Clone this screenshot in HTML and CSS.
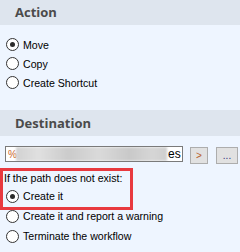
FILE: index.html
```html
<!DOCTYPE html>
<html>
<head>
<meta charset="utf-8">
<link rel="stylesheet" href="styles.css">
</head>
<body>
<div class="panel">
  <div class="band">Action</div>
  <div class="options first">
    <div class="radio checked"><span class="dot"></span>Move</div>
    <div class="radio"><span class="dot"></span>Copy</div>
    <div class="radio"><span class="dot"></span>Create Shortcut</div>
  </div>
  <div class="band band-dest">Destination</div>
  <div class="pathrow">
    <div class="textbox"><span class="var">%</span><span class="blur"></span><span class="tail">es</span></div>
    <div class="btn btn-arrow">&gt;</div>
    <div class="btn btn-more">...</div>
  </div>
  <div class="note">If the path does not exist:</div>
  <div class="options second">
    <div class="radio checked"><span class="dot"></span>Create it</div>
    <div class="radio"><span class="dot"></span>Create it and report a warning</div>
    <div class="radio"><span class="dot"></span>Terminate the workflow</div>
  </div>
  <div class="highlight"></div>
</div>
</body>
</html>
```
FILE: styles.css
```css
html, body {
  margin: 0;
  padding: 0;
  background: #eef5ff;
  width: 240px;
  height: 252px;
  overflow: hidden;
}
.panel {
  position: relative;
  font-family: "Liberation Sans", Arial, sans-serif;
  font-size: 10.6px;
  color: #000;
}
.band {
  height: 25px;
  line-height: 25px;
  background: #dee5ee;
  padding-left: 15px;
  font-family: "Open Sans", sans-serif;
  font-weight: 700;
  font-size: 13px;
  color: #4b4b4b;
}
.band-dest {
  height: 26px;
  line-height: 26px;
  margin-top: 18px;
}
.options.first {
  padding-top: 10px;
}
.radio {
  display: flex;
  align-items: center;
  height: 19px;
  padding-left: 6px;
  gap: 4px;
  white-space: nowrap;
}
.options.second .radio {
  height: 20px;
}
.dot {
  position: relative;
  width: 11px;
  height: 11px;
  border: 1px solid #333;
  border-radius: 50%;
  background: #fff;
  flex: none;
}
.checked .dot::after {
  content: "";
  position: absolute;
  left: 3px;
  top: 3px;
  width: 5px;
  height: 5px;
  border-radius: 50%;
  background: #2a2a2a;
}
.pathrow {
  display: flex;
  align-items: flex-start;
  margin-top: 10px;
  padding-left: 5px;
  height: 18px;
}
.textbox {
  box-sizing: border-box;
  width: 178px;
  height: 16px;
  border: 1px solid #7a7a7a;
  background: #fff;
  display: flex;
  align-items: center;
  overflow: hidden;
}
.var {
  margin-left: 2px;
  width: 8px;
  font-size: 10px;
  color: #c8642a;
}
.blur {
  width: 151px;
  height: 14px;
  background: linear-gradient(90deg, #d2d2d2, #e0e0e0 15%, #cbcbcb 35%, #dadada 55%, #c9c9c9 75%, #d6d6d6 90%, #cfcfcf);
  filter: blur(1px);
}
.tail {
  font-size: 12px;
  margin-left: 1px;
}
.btn {
  box-sizing: border-box;
  height: 17px;
  margin-top: 1px;
  background: #e1e1e1;
  border: 1px solid #adadad;
  display: flex;
  align-items: center;
  justify-content: center;
  font-size: 10px;
  color: #333;
}
.btn-arrow {
  width: 18px;
  margin-left: 7px;
  color: #b8602a;
}
.btn-more {
  width: 22px;
  margin-left: 8px;
  color: #33337a;
  align-items: flex-end;
  padding-bottom: 3px;
  line-height: 8px;
}
.note {
  margin-top: 6px;
  height: 16px;
  line-height: 16px;
  padding-left: 4px;
}
.highlight {
  position: absolute;
  left: 0;
  top: 168px;
  width: 133px;
  height: 42px;
  box-sizing: border-box;
  border: 3px solid #e8393f;
}
```
